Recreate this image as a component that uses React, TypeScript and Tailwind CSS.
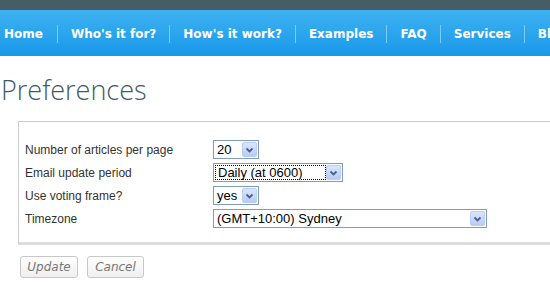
import type { ReactNode } from "react";

const navItems = ["Home", "Who's it for?", "How's it work?", "Examples", "FAQ", "Services", "Blog"];

function Arrow() {
  return (
    <span className="ml-auto flex h-[15px] w-[15px] shrink-0 items-center justify-center rounded-[2px] border border-[#b9cdf6] bg-gradient-to-b from-[#dbe6fd] to-[#b7cbf7]">
      <svg width="9" height="6" viewBox="0 0 9 6">
        <path d="M1.5 1.5 L4.5 4.5 L7.5 1.5" fill="none" stroke="#4d6185" strokeWidth="1.8" />
      </svg>
    </span>
  );
}

function Select({ width, value, focused }: { width: string; value: string; focused?: boolean }) {
  return (
    <div className={`flex h-[19px] items-center border border-[#7f9db9] bg-white pr-[1px] ${width}`}>
      <span
        className={`ml-[1px] flex h-[15px] items-center whitespace-nowrap pl-[2px] text-[13px] leading-none text-black ${
          focused ? "flex-1 border border-dotted border-black" : ""
        }`}
      >
        {value}
      </span>
      <Arrow />
    </div>
  );
}

function Row({ label, children }: { label: string; children: ReactNode }) {
  return (
    <div className="flex h-[23px] items-center">
      <label className="w-[188px] text-[12px] text-[#333]">{label}</label>
      {children}
    </div>
  );
}

export default function App() {
  return (
    <div className="h-[285px] w-[550px] overflow-hidden bg-white font-['Liberation_Sans',Arial,sans-serif]">
      <div className="h-[10px] bg-[#475d66]" />
      <nav className="flex h-[46px] items-center overflow-hidden bg-gradient-to-b from-[#3db2f2] to-[#1698e8] pt-[2px] font-['DejaVu_Sans',Verdana,sans-serif] text-[12px] font-bold text-white">
        {navItems.map((item, i) => (
          <div
            key={item}
            className={`flex h-[18px] shrink-0 items-center whitespace-nowrap ${
              i === 0 ? "pl-[4px] pr-[14px]" : "border-l border-[#7ccdf5] px-[13px]"
            }`}
          >
            {item}
          </div>
        ))}
      </nav>
      <h1 className="mt-[17px] pl-[1px] font-['Open_Sans',sans-serif] text-[27px] font-light leading-[34px] text-[#3e5a66]">
        Preferences
      </h1>
      <div className="ml-[18px] mt-[14px] w-[560px] border-t border-l border-[#ccc] border-b-[3px] border-b-[#ddd] pb-[12px] pl-[6px] pt-[16px]">
        <Row label="Number of articles per page">
          <Select width="w-[46px]" value="20" />
        </Row>
        <Row label="Email update period">
          <Select width="w-[130px]" value="Daily (at 0600)" focused />
        </Row>
        <Row label="Use voting frame?">
          <Select width="w-[46px]" value="yes" />
        </Row>
        <Row label="Timezone">
          <Select width="w-[274px]" value="(GMT+10:00) Sydney" />
        </Row>
      </div>
      <div className="ml-[20px] mt-[11px] flex gap-[9px] font-['DejaVu_Sans',Verdana,sans-serif] text-[12px] italic text-[#777]">
        <button className="h-[22px] w-[58px] rounded-[3px] border border-[#c8c8c8] bg-gradient-to-b from-white to-[#efefef]">
          Update
        </button>
        <button className="h-[22px] w-[57px] rounded-[3px] border border-[#c8c8c8] bg-gradient-to-b from-white to-[#efefef]">
          Cancel
        </button>
      </div>
    </div>
  );
}
